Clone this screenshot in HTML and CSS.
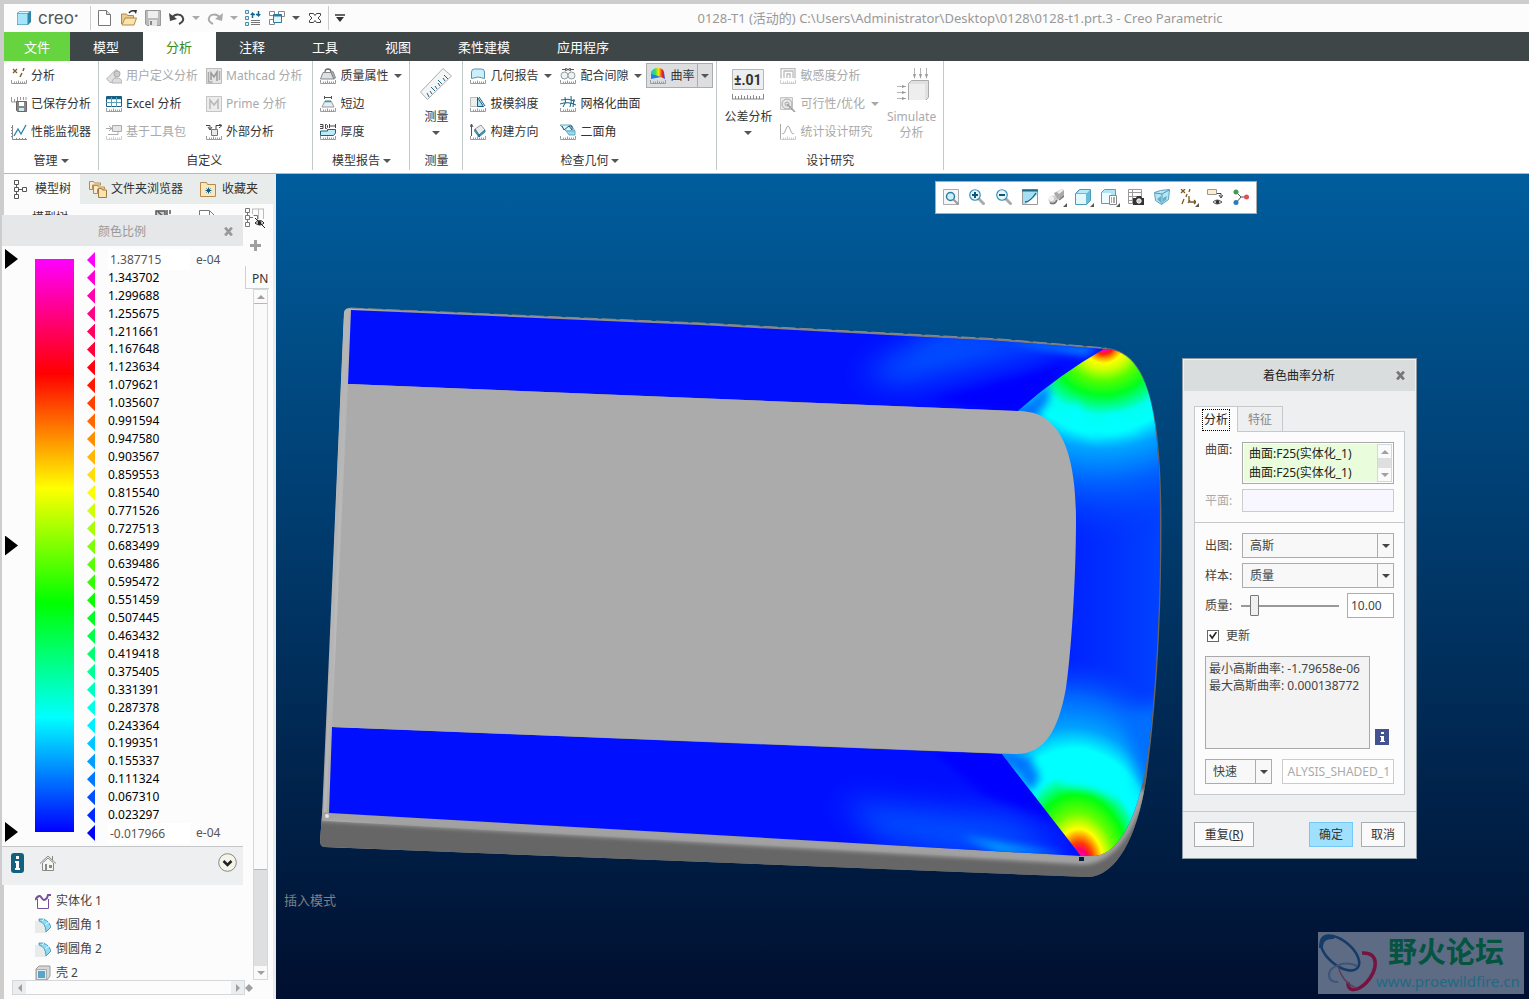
FILE: index.html
```html
<!DOCTYPE html>
<html lang="zh-CN">
    <head>
        <meta charset="utf-8">
        <meta name="viewport" content="width=device-width, initial-scale=1">
        <title>0128-T1 - Creo Parametric</title>
        <link rel="stylesheet" href="styles.css">
    </head>
    <body>
        <svg class="defs" aria-hidden="true">
            <symbol id="ruler" viewBox="0 0 16 16">
                <path d="M.5 12v3.500h15V12M3.500 13.500v2M5.500 13.500v2M7.500 12.500v3M9.500 13.500v2M11.500 13.500v2M13.500 13.500v2" fill="none" stroke="#9a9d9f"/>
            </symbol>
            <symbol id="down" viewBox="0 0 8 4"><path d="M0 0h8L4 4z" fill="currentColor"/></symbol>
            <symbol id="cross" viewBox="0 0 8 8"><path d="M1 .5l6 7M7 .5l-6 7" stroke="currentColor" stroke-width="2.400"/></symbol>
            <symbol id="round" viewBox="0 0 16 16">
                <path d="M0 4h6q5 1 5 7v5H0z" fill="#e9eaea"/>
                <path d="M4 2q9-1 12 8l-5 5q0-9-7-11z" fill="#8fdcf5" stroke="#4c9fbd"/>
                <path d="M7 4l3-3M10 8l4-3" stroke="#d6f5ff"/>
            </symbol>
        </svg>

        <div class="app">
            <header class="titlebar">
                <svg class="cube" viewBox="0 0 16 16"><path d="M1 3l3-2h11v11l-3 3H1z" fill="#2f86ab"/><path d="M1.500 3.500h10v11h-10z" fill="#a5e6fb"/><path d="M2 3l2-1.500h10L12 3z" fill="#d5f5ff"/></svg>
                <span class="brand">creo<i>•</i></span>
                <div class="quick">
                    <button title="新建"><svg viewBox="0 0 16 16"><path d="M1.500.5h8l4 4v11h-12z" fill="#fff" stroke="#777"/><path d="M9.500.5v4h4" fill="#ddd" stroke="#777"/></svg></button>
                    <button title="打开"><svg viewBox="0 0 16 16"><path d="M.5 14V4h5l1 1.500h6V8" fill="#eccb8b" stroke="#b08a4a"/><path d="M1 15l3-7h11.500L13 15z" fill="#fbe3ae" stroke="#b08a4a"/><path d="M8 3q2-3 5-2" fill="none" stroke="#333" stroke-width="1.500"/><path d="M12 0l4 0-1 4z" fill="#333"/></svg></button>
                    <button title="保存"><svg viewBox="0 0 16 16"><path d="M.5.5h15v15H2L.5 14z" fill="#bbb" stroke="#999"/><path d="M3 1h10v7H3z" fill="#eee"/><path d="M4 10h8v6H4z" fill="#e5e5e5"/><path d="M5 11h2v4H5z" fill="#888"/></svg></button>
                    <button title="撤消"><svg viewBox="0 0 16 16"><path d="M3 8c3-5 10-4 11 0 1 3-2 5-4 6" fill="none" stroke="#444" stroke-width="2"/><path d="M0 3l1 8 7-2z" fill="#444"/></svg></button>
                    <button class="more" title="撤消列表"><svg class="arrow pale"><use href="#down"/></svg></button>
                    <button title="重做"><svg viewBox="0 0 16 16"><path d="M13 8C10 3 3 4 2 8c-1 3 2 5 4 6" fill="none" stroke="#aaa" stroke-width="2"/><path d="M16 3l-1 8-7-2z" fill="#aaa"/></svg></button>
                    <button class="more" title="重做列表"><svg class="arrow pale"><use href="#down"/></svg></button>
                    <button title="重新生成"><svg viewBox="0 0 16 16"><path d="M.5.500h3v3h-3zM.5 6.500h3v3h-3zM.5 12.500h3v3h-3z" fill="#d8f3fc" stroke="#4a8db0"/><path d="M6 10.500h9M6 12.500h9M6 14.500h9" stroke="#777"/><path d="M7.500 8V4.500H10M13.500 1v3.500H11" fill="none" stroke="#16648c" stroke-width="1.500"/><path d="M5 5l2.500-3L10 5zM11 4h5l-2.500 3z" fill="#16648c"/></svg></button>
                    <button title="窗口"><svg viewBox="0 0 16 16"><path d="M.5 1.500h5v4h-5zM9.500 1.500h6v5h-6zM.5 9.500h5v5h-5z" fill="#fff" stroke="#888"/><path d="M4.500 4.500h8v8h-8z" fill="#e2f5fc" stroke="#2d7ba0"/><path d="M4 5.500h9" stroke="#2d7ba0" stroke-width="2"/></svg></button>
                    <button class="more" title="窗口列表"><svg class="arrow"><use href="#down"/></svg></button>
                    <button title="关闭"><svg viewBox="0 0 16 16"><path d="M2.500 3.500h4L8 5.500l1.500-2h4v2L11 8l2.500 2.500v2h-4L8 10.500l-1.500 2h-4v-2L5 8 2.500 5.500z" fill="#fff" stroke="#444"/></svg></button>
                </div>
                <button class="customize" title="自定义"><svg viewBox="0 0 10 8"><path d="M0 1h10" stroke="#333" stroke-width="1.500"/><path d="M1 3h8L5 8z" fill="#333"/></svg></button>
                <h1>0128-T1 (活动的) C:\Users\Administrator\Desktop\0128\0128-t1.prt.3 - Creo Parametric</h1>
            </header>

            <nav class="tabs">
                <button class="file">文件</button>
                <button>模型</button>
                <button class="active">分析</button>
                <button>注释</button>
                <button>工具</button>
                <button>视图</button>
                <button>柔性建模</button>
                <button>应用程序</button>
            </nav>

            <div class="ribbon">
                <section class="group">
                    <div class="cols">
                        <div class="col">
                            <button class="cmd"><svg viewBox="0 0 16 16"><use href="#ruler"/><path d="M2 1l4 4M6 1L2 5" stroke="#7b5f2b" stroke-width="1.300"/><path d="M13 0l-1 3M11 5l-2 4" stroke="#7b5f2b" stroke-width="1.500"/></svg>分析</button>
                            <button class="cmd"><svg viewBox="0 0 16 16"><path d="M.5 1v5h6M3.500 3v3M6.500 1v4M9.500 1v3M12.500 1v3M15 1v3" fill="none" stroke="#999"/><path d="M5.500 5.500h10v10h-9l-1-1z" fill="#888" stroke="#666"/><path d="M8 6h5v4H8z" fill="#fff"/><path d="M8 12h5v3H8z" fill="#ccebf5"/></svg>已保存分析</button>
                            <button class="cmd"><svg viewBox="0 0 16 16"><path d="M1.500 1v14.500H16M0 3.500h2M0 6.500h2M0 9.500h2M0 12.500h2M5.500 14v2M8.500 14v2M11.500 14v2M14.500 14v2" fill="none" stroke="#888"/><path d="M3 12l4-7 3 5 5-9" fill="none" stroke="#2681b2" stroke-width="1.300"/></svg>性能监视器</button>
                        </div>
                    </div>
                    <button class="label">管理<svg class="arrow"><use href="#down"/></svg></button>
                </section>

                <section class="group custom">
                    <div class="cols">
                        <div class="col">
                            <button class="cmd" disabled><svg viewBox="0 0 16 16"><path d="M.5 11L10 1.500l4 3L5 15z" fill="#e1e1e1" stroke="#b5b5b5"/><circle cx="11" cy="6" r="3" fill="#ccc" stroke="#aaa"/><path d="M6 15q0-5 5-5t5 5z" fill="#ddd" stroke="#b5b5b5"/></svg>用户定义分析</button>
                            <button class="cmd"><svg viewBox="0 0 16 16"><use href="#ruler"/><path d="M.5.500h15v10H.5z" fill="#fff" stroke="#16607f"/><path d="M1 2h15" stroke="#16607f" stroke-width="2.500"/><path d="M5.500 1v10M10.500 1v10M0 6.500h15" stroke="#5c9db8"/></svg>Excel 分析</button>
                            <button class="cmd" disabled><svg viewBox="0 0 16 16"><use href="#ruler" opacity=".5"/><path d="M6.500 1.500h9v6h-9z" fill="#e5e5e5" stroke="#aaa"/><path d="M0 4.500h6M3 2l3 2.500L3 7M12 8v2.500H2" fill="none" stroke="#aaa"/></svg>基于工具包</button>
                        </div>
                        <div class="col">
                            <button class="cmd" disabled><svg viewBox="0 0 16 16"><path d="M.5.500h15v15H.5z" fill="#e5e5e5" stroke="#bbb"/><path d="M2.500 4v10h4M13.500 3v9" fill="none" stroke="#aaa" stroke-width="1.500"/><path d="M5 12V5l3 4 3-5v9" fill="none" stroke="#999" stroke-width="1.500"/></svg>Mathcad 分析</button>
                            <button class="cmd" disabled><svg viewBox="0 0 16 16"><path d="M.5.500h15v15H.5z" fill="#ececec" stroke="#c5c5c5"/><path d="M4 13V4l4 5 4-5v9" fill="none" stroke="#b8b8b8" stroke-width="1.500"/></svg>Prime 分析</button>
                            <button class="cmd"><svg viewBox="0 0 16 16"><use href="#ruler"/><path d="M5.500 5.500h6v6h-6z" fill="#e7eaea" stroke="#777"/><path d="M0 1.500h4v4M2 3l2 3 2-3M10 5V1.500h5M13 0l3 1.500L13 4" fill="none" stroke="#444"/></svg>外部分析</button>
                        </div>
                    </div>
                    <span class="label">自定义</span>
                </section>

                <section class="group">
                    <div class="cols">
                        <div class="col">
                            <button class="cmd"><svg viewBox="0 0 16 16"><use href="#ruler"/><path d="M3 4.500h8l3 6.500H.5z" fill="#dce1e3" stroke="#888"/><path d="M11 4.500l2-1 2.500 6.500-1.500 1z" fill="#aab2b5" stroke="#888"/><path d="M5 4q0-3 3-3t3 3" fill="none" stroke="#666" stroke-width="1.300"/></svg>质量属性<svg class="arrow"><use href="#down"/></svg></button>
                            <button class="cmd"><svg viewBox="0 0 16 16"><use href="#ruler"/><path d="M5 5h6l3 6H2z" fill="#e5eef1" stroke="#999"/><path d="M5 5.500h6" stroke="#2a97bd" stroke-width="1.500"/><path d="M4.500 0v3M11.500 0v3M5 1.500h6" stroke="#555"/></svg>短边</button>
                            <button class="cmd"><svg viewBox="0 0 16 16"><use href="#ruler"/><path d="M.5 7h7v-1.500h8V9l-2 2.500H.5z" fill="#bfe9f7" stroke="#17617f"/><path d="M0 .500h3v4H0M0 2.500h3M5.500.5h1l1 1v2l-1 1h-1zM9.500 0v4M15.500 0v4M10 2h5" fill="none" stroke="#444"/></svg>厚度</button>
                        </div>
                    </div>
                    <button class="label">模型报告<svg class="arrow"><use href="#down"/></svg></button>
                </section>

                <section class="group">
                    <div class="cols">
                        <button class="big">
                            <svg class="pic" viewBox="0 0 34 32"><path d="M1.500 24L24 .500 32.500 8 8.500 31.500z" fill="#f4f5f5" stroke="#a9adaf"/><path d="M10 29l-2-4M13 26l-2-3M16 23l-4-4M18 21l-2-3M21 18l-2-3M23 16l-4-4M26 13l-2-3M29 11l-4-4" stroke="#27617f"/></svg>
                            测量
                            <svg class="arrow"><use href="#down"/></svg>
                        </button>
                    </div>
                    <span class="label">测量</span>
                </section>

                <section class="group">
                    <div class="cols">
                        <div class="col">
                            <button class="cmd"><svg viewBox="0 0 16 16"><use href="#ruler"/><path d="M1.500 10.500V4q0-3 3-3h7q3 0 3 3v6.500q-6-3-13 0z" fill="#c9effb" stroke="#5f93a6"/></svg>几何报告<svg class="arrow"><use href="#down"/></svg></button>
                            <button class="cmd"><svg viewBox="0 0 16 16"><use href="#ruler"/><path d="M.5 1.500h7v9h-7z" fill="#eceeee" stroke="#bbb"/><path d="M7.500 1.500l6 9h-6z" fill="#a9e2f5" stroke="#155f7f"/><path d="M9 1l6 9" stroke="#155f7f"/></svg>拔模斜度</button>
                            <button class="cmd"><svg viewBox="0 0 16 16"><use href="#ruler"/><path d="M1.500 12V1M0 3l1.500-3L3 3" fill="none" stroke="#555"/><path d="M5 5l6-4 4 5-6 5z" fill="#e9ecec" stroke="#999"/><path d="M5 5l4 6v2L4.500 7zM9 11l6-5v2l-6 5z" fill="#4fa9c9" stroke="#155f7f" stroke-width=".7"/></svg>构建方向</button>
                        </div>
                        <div class="col">
                            <button class="cmd"><svg viewBox="0 0 16 16"><use href="#ruler"/><circle cx="4.500" cy="7.500" r="3.500" fill="#e8f4f8" stroke="#999"/><circle cx="11.500" cy="7.500" r="3.500" fill="#e8f4f8" stroke="#999"/><path d="M2 1.500h4M14 1.500h-4M5 0l3 1.500L5 3M11 0L8 1.500 11 3" fill="none" stroke="#555"/></svg>配合间隙<svg class="arrow"><use href="#down"/></svg></button>
                            <button class="cmd"><svg viewBox="0 0 16 16"><use href="#ruler"/><path d="M1 4q7-2 14 1M0 8q8-3 16 1M5 1q2 5-2 10M11 0q1 6-1 11M14 3l-1 8" fill="none" stroke="#17617f"/></svg>网格化曲面</button>
                            <button class="cmd"><svg viewBox="0 0 16 16"><use href="#ruler"/><path d="M0 1h11l4 6H6z" fill="#def3f9" stroke="#6aa7bd"/><path d="M6 7h9v4H9z" fill="#8fdcf2" stroke="#6aa7bd"/><path d="M2 2l2 4 5-4 3 4M9 2h3v4" fill="none" stroke="#17617f"/></svg>二面角</button>
                        </div>
                        <div class="split">
                            <button class="cmd"><svg viewBox="0 0 16 16"><defs><linearGradient id="spec"><stop offset="0" stop-color="#24b9ff"/><stop offset=".3" stop-color="#35e050"/><stop offset=".55" stop-color="#ffe500"/><stop offset=".8" stop-color="#f02020"/><stop offset="1" stop-color="#3048ff"/></linearGradient></defs><use href="#ruler"/><path d="M1 10V4q2-4 7-4t6 4l1 7q-6-4-14-1z" fill="url(#spec)"/><path d="M1 11V6l4 1 3 1 3 1z" fill="#247cf0"/></svg>曲率</button>
                            <button class="drop" title="曲率选项"><svg class="arrow"><use href="#down"/></svg></button>
                        </div>
                    </div>
                    <button class="label">检查几何<svg class="arrow"><use href="#down"/></svg></button>
                </section>

                <section class="group">
                    <div class="cols">
                        <button class="big">
                            <svg class="pic" viewBox="0 0 34 32"><path d="M1.500 1.500h31v20h-31z" fill="#eceeef" stroke="#b5b9bb"/><path d="M1.500 31V26M4.500 28v3M7.500 28v3M10.500 27v4M13.500 28v3M16.500 27v4M19.500 28v3M22.500 27v4M25.500 28v3M28.500 28v3M32.500 26v5M1 31h32" stroke="#888"/><text class="tol" x="3" y="17">±.01</text></svg>
                            公差分析
                            <svg class="arrow"><use href="#down"/></svg>
                        </button>
                        <div class="col">
                            <button class="cmd" disabled><svg viewBox="0 0 16 16"><use href="#ruler" opacity=".5"/><path d="M1 10.500V.500h14v10M4 10V3h9v7M7 10V6h3v4" fill="none" stroke="#bbb" stroke-width="1.300"/></svg>敏感度分析</button>
                            <button class="cmd" disabled><svg viewBox="0 0 16 16"><path d="M.5 1.500h12v12H.5z" fill="#e9e9e9" stroke="#c5c5c5"/><circle cx="7" cy="8" r="5" fill="none" stroke="#aaa"/><circle cx="7" cy="8" r="2" fill="none" stroke="#aaa"/><path d="M7 8l8 8" stroke="#999" stroke-width="1.500"/></svg>可行性/优化<svg class="arrow"><use href="#down"/></svg></button>
                            <button class="cmd" disabled><svg viewBox="0 0 16 16"><use href="#ruler" opacity=".5"/><path d="M.5 0v15M2 10q3 0 4-5 2-6 4 0 1 5 4 5" fill="none" stroke="#aaa"/></svg>统计设计研究</button>
                        </div>
                        <button class="big" disabled>
                            <svg class="pic" viewBox="0 0 34 32"><path d="M13.500 15.500l3-3h17v17l-3 3h-17z" fill="#e0e0e0" stroke="#aaa"/><path d="M14 16h16v16H14z" fill="#eee"/><path d="M19.500 0v9M25.500 0v9M31.500 0v9M2 18.500h9M2 24.500h9M2 30.500h9" stroke="#b5b5b5"/><path d="M18 6h3l-1.500 5zM24 6h3l-1.500 5zM30 6h3l-1.500 5zM7 17v3l4-1.500zM7 23v3l4-1.500zM7 29v3l4-1.500z" fill="#999"/></svg>
                            Simulate<br>分析
                        </button>
                    </div>
                    <span class="label">设计研究</span>
                </section>
            </div>

            <main>
                <aside class="navigator">
                    <div class="navtabs">
                        <button class="active"><svg viewBox="0 0 16 20"><path d="M2.500 1.500h4v4h-4zM2.500 8.500h4v4h-4zM2.500 15.500h4v4h-4zM10.500 8.500h4v4h-4zM4.500 6v2M4.500 13v2M7 10.500h3" fill="#fff" stroke="#555"/></svg>模型树</button>
                        <button><svg class="wide" viewBox="0 0 19 20"><path d="M1.500 10.500v-8h4l1 1.500h6v2H4.500v4.500z" fill="#fbeacb" stroke="#b58a4d"/><path d="M5.500 14.500v-8h4l1 1.500h6v2H9.500v4.500z" fill="#fbeacb" stroke="#b58a4d"/><path d="M10.500 18.500v-9h3l1 1.500h4v7.500z" fill="#fbe2b3" stroke="#a47b3f"/></svg>文件夹浏览器</button>
                        <button><svg class="wide" viewBox="0 0 19 20"><path d="M1.500 17.500v-14h6l1 2h8v12z" fill="#fbe7bd" stroke="#b58a4d"/><path d="M9.500 8.500v6M6.500 11.500h6M7.500 9.500l4 4M11.500 9.500l-4 4" stroke="#125f85"/></svg>收藏夹</button>
                    </div>
                    <div class="treehead"><b>模型树</b>
                        <svg viewBox="0 0 18 18"><path d="M2 2h9v5H2zM13 1v8M16 1v4M4 3l6 5" fill="#ccc" stroke="#555" stroke-width="1.500"/></svg>
                        <svg viewBox="0 0 18 18"><path d="M1.500 16V1.500h10l5 5V16" fill="#fff" stroke="#777"/><path d="M11.500 2v5h5" fill="none" stroke="#777"/></svg>
                    </div>
                    <div class="treebody">
                        <div class="treemain">
                            <ul class="tree">
                                <li><svg viewBox="0 0 16 16"><path d="M2.500 6v9.500h11V6" fill="#fff" stroke="#77509b"/><path d="M0 7q4-6 6-3t3 3 3-2l1-3h3" fill="none" stroke="#77509b" stroke-width="2"/></svg>实体化 1</li>
                                <li><svg><use href="#round"/></svg>倒圆角 1</li>
                                <li><svg><use href="#round"/></svg>倒圆角 2</li>
                                <li><svg viewBox="0 0 16 16"><path d="M1 4l3-3h11v10l-3 4H1z" fill="#d5d8d9" stroke="#999"/><path d="M1.500 4.500h10v10h-10z" fill="#e9ebeb" stroke="#aaa"/><path d="M3 6h7v7H3z" fill="#57a6c9"/></svg>壳 2</li>
                            </ul>
                            <div class="hscroll"><button title="左"><svg viewBox="0 0 4 8"><path d="M4 0v8L0 4z"/></svg></button><span></span><button title="右"><svg viewBox="0 0 4 8"><path d="M0 0v8l4-4z"/></svg></button></div>
                        </div>
                        <div class="treecol">
                            <div class="coltools">
                                <svg viewBox="0 0 21 22"><path d="M.5 1.500h4v4h-4zM.5 8.500h4v4h-4zM.5 15.500h4v4h-4zM8.500 8.500h4v4M2.500 6v2M2.500 13v2M5 10.500h3" fill="#fff" stroke="#777"/><path d="M7 2h12M7.500 2v5M13.500 2v10M18.500 2v10" fill="none" stroke="#bbb"/><path d="M10 16q5-5 9 0-4 4-9 0z" fill="#fff" stroke="#222"/><circle cx="14.500" cy="16" r="2" fill="#222"/><path d="M10 11l10 10" stroke="#222"/></svg>
                                <svg class="plus" viewBox="0 0 11 11"><path d="M5.500 0v11M0 5.500h11" stroke="#a0a0a0" stroke-width="3"/></svg>
                            </div>
                            <div class="colname">PN</div>
                            <div class="vscroll"><button title="上"><svg viewBox="0 0 8 4"><path d="M0 4h8L4 0z"/></svg></button><span></span><button title="下"><svg viewBox="0 0 8 4"><path d="M0 0h8L4 4z"/></svg></button></div>
                            <div class="corner"><svg viewBox="0 0 8 8"><path d="M4 0l4 4-4 4-4-4z"/></svg></div>
                        </div>
                    </div>
                </aside>

                <div class="viewport">
                    <svg class="model" viewBox="276 174 1253 825" role="img" aria-label="曲率着色模型">
                        <defs>
                            <radialGradient id="hotTop" gradientUnits="userSpaceOnUse" cx="0" cy="0" r="175" gradientTransform="translate(1104 345) rotate(-6) scale(1.250 1.140)">
                                <stop offset="0" stop-color="#f0f"/><stop offset=".030" stop-color="#ff00a0"/><stop offset=".045" stop-color="#f20"/><stop offset=".065" stop-color="#ff9000"/>
                                <stop offset=".090" stop-color="#ff0"/><stop offset=".125" stop-color="#cf0"/><stop offset=".180" stop-color="#5f0"/><stop offset=".250" stop-color="#00ff20"/><stop offset=".310" stop-color="#0f9"/>
                                <stop offset=".350" stop-color="#00fff0"/><stop offset=".430" stop-color="#0ff"/><stop offset=".520" stop-color="#00a4ff"/><stop offset=".680" stop-color="#0064ff"/>
                                <stop offset="1" stop-color="#0030ff" stop-opacity="0"/>
                            </radialGradient>
                            <radialGradient id="hotBottom" gradientUnits="userSpaceOnUse" cx="0" cy="0" r="150" gradientTransform="translate(1080 859) rotate(-8) scale(1 1.340)">
                                <stop offset="0" stop-color="#f0f"/><stop offset=".050" stop-color="#ff0060"/><stop offset=".085" stop-color="#f40"/><stop offset=".150" stop-color="#ff0"/>
                                <stop offset=".230" stop-color="#6f0"/><stop offset=".320" stop-color="#00ff10"/><stop offset=".380" stop-color="#00ff90"/><stop offset=".430" stop-color="#0ff"/>
                                <stop offset=".550" stop-color="#0ff"/><stop offset=".660" stop-color="#00a0ff"/><stop offset=".820" stop-color="#0064ff"/><stop offset="1" stop-color="#0040ff" stop-opacity="0"/>
                            </radialGradient>
                            <linearGradient id="band" x1="0" x2="1"><stop offset=".3" stop-color="#0018ff"/><stop offset=".7" stop-color="#0030ff"/><stop offset="1" stop-color="#0044ff"/></linearGradient>
                            <linearGradient id="edge" x1="0" x2="1"><stop offset="0" stop-color="#8a8a8a"/><stop offset=".030" stop-color="#bbb"/><stop offset=".100" stop-color="#999"/><stop offset=".900" stop-color="#777"/><stop offset="1" stop-color="#606060"/></linearGradient>
                            <filter id="soft" x="-50%" y="-50%" width="200%" height="200%"><feGaussianBlur stdDeviation="14"/></filter>
                            <filter id="mid" x="-50%" y="-50%" width="200%" height="200%"><feGaussianBlur stdDeviation="8"/></filter>
                            <filter id="thin" x="-20%" y="-50%" width="140%" height="200%"><feGaussianBlur stdDeviation="4"/></filter>
                            <filter id="bevel" x="-5%" y="-20%" width="110%" height="140%"><feGaussianBlur stdDeviation="2"/></filter>
                            <clipPath id="body"><path d="M344 312Q345 308 350 308L700 323 1000 339 1106 348C1132 350 1148 372 1156 425 1162 470 1162 520 1161 570 1160 640 1155 720 1146 780 1137 838 1116 876 1088 877L324 847Q320 846 320 841L322 815z"/></clipPath>
                            <clipPath id="faceTop"><path d="M351 310L700 325 1000 341 1104 349Q1060 374 1018 411L348 384z"/></clipPath>
                            <clipPath id="faceBottom"><path d="M332 727L1002 754 1081 856 329 813z"/></clipPath>
                            <clipPath id="faceRight"><path d="M1104 349C1130 349 1148 372 1155 425 1160 465 1160 500 1160 560 1159 620 1156 700 1145 770 1138 810 1122 853 1095 856L1081 856 1002 754 980 600 1018 411Q1060 374 1104 349z"/></clipPath>
                        </defs>
                        <g clip-path="url(#body)">
                            <path d="M310 300h860v590H310z" fill="url(#edge)"/>
                            <path d="M310 820L1079 863Q1122 866 1146 770L1170 880H310z" fill="#666"/>
                            <path d="M312 815L1079 859Q1118 862 1142 790" fill="none" stroke="#a2a2a2" stroke-width="11" filter="url(#bevel)"/>
                            <path d="M325 812L345 318" stroke="#b5b5b5" stroke-width="3"/>
                        </g>
                        <circle cx="327" cy="816" r="2" fill="#e5e5e5"/>
                        <g clip-path="url(#faceTop)">
                            <path d="M340 300h780v120H340z" fill="#0010ff"/>
                            <path d="M860 375L940 325 1060 330 1050 350 900 385z" fill="#0060ff" opacity=".8" filter="url(#soft)"/>
                            <path d="M930 400L1070 362 1020 415z" fill="#00f" filter="url(#thin)"/>
                            <path d="M1010 342L1100 348 1085 355 1040 348z" fill="#009cff" filter="url(#thin)"/>
                        </g>
                        <g clip-path="url(#faceBottom)">
                            <path d="M320 720h770v140H320z" fill="#0010ff"/>
                            <path d="M840 800L1010 815 1070 850 960 860 880 840z" fill="#0060ff" opacity=".75" filter="url(#soft)"/>
                            <path d="M930 750h75l50 70-70-25z" fill="#00f" filter="url(#thin)"/>
                            <path d="M960 836L1070 855 1000 853z" fill="#00a8ff" filter="url(#thin)"/>
                        </g>
                        <g clip-path="url(#faceRight)">
                            <path d="M980 340h185v520H980z" fill="url(#band)"/>
                            <path d="M980 340h185v220H980z" fill="url(#hotTop)"/>
                            <path d="M980 600h185v260H980z" fill="url(#hotBottom)"/>
                            <path d="M1075 400L1100 440 1060 425zM1110 412L1140 430 1100 436z" fill="#0ff" filter="url(#thin)"/>
                            <path d="M1055 758L1085 748 1110 775 1120 800 1095 790 1060 785z" fill="#0ff" filter="url(#thin)"/>
                            <path d="M1125 715L1175 700 1160 810 1142 785z" fill="#0070ff" filter="url(#mid)"/>
                            <path d="M1010 415L1050 383 1048 402 1034 420zM1002 754L1030 757 1040 778 1030 792z" fill="#0058ff" opacity=".8" filter="url(#thin)"/>
                        </g>
                        <path d="M348 384L1018 411C1052 411 1076 436 1076 520 1076 580 1071 655 1066 688 1058 732 1044 755 1014 754L332 727z" fill="#ababab"/>
                        <path d="M350 308L700 323 1000 339 1106 348" fill="none" stroke="#8a8a8a" stroke-dasharray="14 4"/>
                        <path d="M1079 857h5v4h-5z" fill="#001a40"/>
                    </svg>

                    <div class="viewtools">
                        <button title="重新调整"><svg viewBox="0 0 16 16"><path d="M.5.500h15v15H.5z" fill="#f6f6f6" stroke="#aaa"/><circle cx="7.500" cy="7.500" r="4" fill="#cceffa" stroke="#2c7fa2" stroke-width="1.500"/><path d="M10.500 10.500l5 5" stroke="#999" stroke-width="2"/></svg></button>
                        <button title="放大"><svg viewBox="0 0 16 16"><path d="M9.500 9.500l6 6" stroke="#aaa" stroke-width="3"/><circle cx="6" cy="6" r="5.250" fill="#e6f8fd" stroke="#3a8db0" stroke-width="1.200"/><path d="M3 6h6M6 3v6" stroke="#0e587b" stroke-width="2"/></svg></button>
                        <button title="缩小"><svg viewBox="0 0 16 16"><path d="M9.500 9.500l6 6" stroke="#aaa" stroke-width="3"/><circle cx="6" cy="6" r="5.250" fill="#e6f8fd" stroke="#3a8db0" stroke-width="1.200"/><path d="M3 6h6" stroke="#0e587b" stroke-width="2"/></svg></button>
                        <button title="重画"><svg viewBox="0 0 16 16"><path d="M.5.500h15v15H.5z" fill="#a7dff2" stroke="#999"/><path d="M0 1.500h16" stroke="#1b6a8b" stroke-width="2"/><path d="M4 15L15 6v9z" fill="#fff"/><path d="M3 13q5 0 11-9" fill="none" stroke="#17617f" stroke-width="1.300"/></svg></button>
                        <button title="渲染"><svg viewBox="0 0 16 16"><path d="M6 4l8-4 2 1v6l-7 4z" fill="#aaa"/><path d="M9 3l5-3 2 1-5 4z" fill="#eee"/><circle cx="5" cy="11" r="4.500" fill="#ccc"/><circle cx="3.500" cy="9.500" r="2.500" fill="#f2f2f2"/><path d="M2 14q5 2 7-3M11 11l5-4" fill="none" stroke="#777" stroke-width="1.500"/></svg><i></i></button>
                        <button title="显示样式"><svg viewBox="0 0 16 16"><path d="M.5 4.500l4-4h11v11l-4 4H.5z" fill="#67bbd9" stroke="#4a9ab9"/><path d="M1 5h10v10H1z" fill="#e3f7fd"/><path d="M2 4l3-3h10l-3 3z" fill="#b5eafa"/></svg><i></i></button>
                        <button title="已保存方向"><svg viewBox="0 0 16 16"><path d="M.5 3.500l3-3h11v11l-3 3H.5z" fill="#aee6f8" stroke="#559fba"/><path d="M1 4h9v10H1z" fill="#f0fbff"/><path d="M8.500 6.500h7v9h-7z" fill="#fff" stroke="#888"/><path d="M10 9h1M12 9h2M10 11h1M12 11h2M10 13h1M12 13h2" stroke="#555"/></svg><i></i></button>
                        <button title="视图管理器"><svg viewBox="0 0 16 16"><path d="M.5.500h13v14H.5zM0 3.500h14M0 7.500h14M0 11.500h14M4.500 0v15" fill="#fff" stroke="#999"/><path d="M5 9h3l1-2h4l1 2h2v7H5z" fill="#333"/><circle cx="11" cy="12" r="2.200" fill="#ccc" stroke="#fff"/></svg></button>
                        <button title="透视图"><svg viewBox="0 0 16 16"><path d="M.5 3.500l6-2 9-1-1 10-7 5-6-4z" fill="#b5e6f5" stroke="#5aa0bb"/><path d="M1 4l7 1 7-4M8 5v10" fill="none" stroke="#4c9bb9"/><path d="M3 10l4-3v7zM9 9l4-2-1 4-3 2z" fill="#6badc6"/></svg></button>
                        <button title="基准显示"><svg viewBox="0 0 16 16"><path d="M1 0l4 4M5 0L1 4M10 0L9 3M7 5L6 8M4 10l-2 5" stroke="#7a5b22" stroke-width="1.300"/><path d="M9 7v6h7M14 11l2 2-2 2M8 14l2-3" fill="none" stroke="#7a5b22" stroke-width="1.300"/></svg><i></i></button>
                        <button title="注释显示"><svg viewBox="0 0 16 16"><path d="M.5.500h9v5h-9z" fill="#fdeecb" stroke="#999"/><path d="M10 4.500h4v4M12 6l2 3 2-3" fill="none" stroke="#444"/><path d="M6 13q4-4 9 0-5 4-9 0z" fill="#fff" stroke="#555"/><circle cx="10.500" cy="13" r="2" fill="#333"/></svg></button>
                        <button title="旋转中心"><svg viewBox="0 0 16 16"><path d="M3 3l5 5-5 6M8 8h5" fill="none" stroke="#555"/><circle cx="3" cy="3" r="2.500" fill="#3f9c50"/><circle cx="3" cy="13.500" r="2.500" fill="#2a7eb8"/><circle cx="13.500" cy="8" r="2.500" fill="#df5353"/></svg></button>
                    </div>

                    <p class="mode">插入模式</p>

                    <div class="watermark">
                        <svg viewBox="0 0 60 60"><ellipse cx="22" cy="21" rx="12" ry="23" transform="rotate(-50 22 21)" fill="none" stroke="#153c66" stroke-width="2.500"/><path d="M3 16Q3 4 16 5" fill="none" stroke="#153c66" stroke-width="4"/><path d="M39 34C28 28 11 34 11 43q0 7 9 7" fill="none" stroke="#3a5577" stroke-width="2"/><path d="M44 21C62 20 60 38 48 51 40 59 29 61 30 50" fill="none" stroke="#74143f" stroke-width="3.500"/><path d="M20 34Q24 50 38 56" fill="none" stroke="#54415f" stroke-width="1.500"/></svg>
                        <div><strong>野火论坛</strong><span>www.proewildfire.cn</span></div>
                    </div>
                </div>
            </main>
        </div>

        <section class="window scale">
            <header><h2>颜色比例</h2><button title="关闭"><svg><use href="#cross"/></svg></button></header>
            <div class="legend">
                <div class="stops"><span></span><span></span><span></span></div>
                <div class="ramp"></div>
                <ol id="levels"></ol>
            </div>
            <footer>
                <svg class="info" viewBox="0 0 13 20"><rect width="13" height="20" rx="3" fill="#14607f"/><path d="M5 3h3v3H5zM4 8h4v7h1v2H4v-2h1v-5H4z" fill="#fff"/></svg>
                <svg class="home" viewBox="0 0 16 16"><path d="M2.500 8v7.500h11V8L8 3z" fill="#f5f5f0" stroke="#888"/><path d="M0 8.500L8 1l8 7.500M12.500 1v4" fill="none" stroke="#888"/><path d="M5 9h2v6H5zM9 10h3v3H9z" fill="#888"/></svg>
                <button title="展开"><svg viewBox="0 0 19 19"><circle cx="9.500" cy="9.500" r="8.800" fill="#f5f4e9" stroke="#888"/><path d="M5.500 8l4 4 4-4" fill="none" stroke="#222" stroke-width="2.500"/></svg></button>
            </footer>
        </section>

        <form class="window shading" onsubmit="return false">
            <header><h2>着色曲率分析</h2><button type="button" title="关闭"><svg><use href="#cross"/></svg></button></header>
            <div class="pagetabs"><button type="button" class="active"><span>分析</span></button><button type="button">特征</button></div>
            <div class="page">
                <div class="field top"><label for="surf">曲面:</label>
                    <div class="listbox"><select id="surf" size="2"><option>曲面:F25(实体化_1)</option><option>曲面:F25(实体化_1)</option></select>
                        <div class="vscroll"><button type="button" title="上"><svg viewBox="0 0 8 4"><path d="M0 4h8L4 0z"/></svg></button><button type="button" title="下"><svg viewBox="0 0 8 4"><path d="M0 0h8L4 4z"/></svg></button></div></div>
                </div>
                <div class="field off"><label for="plane">平面:</label><input id="plane" type="text" disabled></div>
                <hr>
                <div class="field"><label for="plot">出图:</label><span class="combo"><select id="plot"><option>高斯</option></select><i><svg><use href="#down"/></svg></i></span></div>
                <div class="field"><label for="sample">样本:</label><span class="combo"><select id="sample"><option>质量</option></select><i><svg><use href="#down"/></svg></i></span></div>
                <div class="field"><label for="quality">质量:</label><input id="quality" type="range" min="0" max="100" value="10"><input class="num" type="text" value="10.00" aria-label="质量值"></div>
                <div class="field check"><input id="update" type="checkbox" checked><label for="update">更新</label></div>
                <div class="result">
                    <textarea readonly aria-label="结果">最小高斯曲率: -1.79658e-06
最大高斯曲率: 0.000138772</textarea>
                    <svg viewBox="0 0 14 16"><path d="M0 0h14v16H0z" fill="#43538f"/><path d="M6 3h3v2H6zM5 7h4v5h1v1H5v-1h1V8H5z" fill="#fff"/></svg>
                </div>
                <div class="field save"><span class="combo"><select aria-label="类型"><option>快速</option></select><i><svg><use href="#down"/></svg></i></span><span class="name"><input type="text" value="ALYSIS_SHADED_1" disabled aria-label="名称"></span></div>
            </div>
            <footer>
                <button type="button">重复(<u>R</u>)</button>
                <button type="submit" class="ok">确定</button>
                <button type="button">取消</button>
            </footer>
        </form>

        <script>
            const levels = ["1.387715", "1.343702", "1.299688", "1.255675", "1.211661", "1.167648", "1.123634", "1.079621",
                "1.035607", "0.991594", "0.947580", "0.903567", "0.859553", "0.815540", "0.771526", "0.727513", "0.683499",
                "0.639486", "0.595472", "0.551459", "0.507445", "0.463432", "0.419418", "0.375405", "0.331391", "0.287378",
                "0.243364", "0.199351", "0.155337", "0.111324", "0.067310", "0.023297", "-0.017966"];
            const last = levels.length - 1;

            // hue runs magenta -> red -> yellow -> green -> cyan -> blue
            document.getElementById("levels").innerHTML = levels.map(function (value, i) {
                const hue = (300 + 300 * i / last) % 360;
                const mark = '<i style="background: hsl(' + hue + ', 100%, 50%)"></i>';
                if (i === 0 || i === last) {
                    return '<li>' + mark + '<input type="text" value="' + value + '" aria-label="界限"><span>e-04</span></li>';
                }
                return '<li>' + mark + value + '</li>';
            }).join("");
        </script>
    </body>
</html>
```
FILE: styles.css
```css
* {
    box-sizing: border-box;
}
body {
    margin: 0;
    color: #333;
    font: 12px/16px "Noto Sans", "Noto Sans CJK SC", sans-serif;
}
button, input, select, textarea {
    margin: 0;
    padding: 0;
    border: 0;
    border-radius: 0;
    background: none;
    color: inherit;
    font: inherit;
}
svg {
    display: block;
    flex: none;
}
h1, h2, p, ul, ol {
    margin: 0;
    padding: 0;
    font-size: 12px;
    font-weight: normal;
    list-style: none;
}
.defs {
    position: absolute;
    width: 0;
    height: 0;
}
.arrow {
    width: 8px;
    height: 4px;
    color: #555;
}
.arrow.pale {
    color: #aaa;
}
.app {
    display: flex;
    flex-direction: column;
    height: 100vh;
    border-top: 4px solid #cdcdcd;
    border-left: 4px solid #cdcdcd;
    overflow: hidden;
}

/* title bar */
.titlebar {
    display: flex;
    align-items: center;
    flex: none;
    height: 28px;
    padding-left: 12px;
    background: #fcfcfc;
}
.cube {
    width: 16px;
    height: 16px;
}
.brand {
    width: 50px;
    padding: 0 0 3px 6px;
    color: #555;
    font: 17px/20px Inter, sans-serif;
}
.brand i {
    font-size: 8px;
    vertical-align: 6px;
}
.quick {
    display: flex;
    align-items: center;
    height: 24px;
    padding: 0 1px 0 2px;
    border: solid #ccc;
    border-width: 0 1px;
    margin-left: 8px;
}
.quick button {
    padding: 0 4px;
}
.quick button svg {
    width: 16px;
    height: 16px;
}
.quick .more {
    padding: 0 3px;
}
.quick .more svg {
    width: 8px;
    height: 4px;
}
.customize {
    padding: 0 6px;
}
.customize svg {
    width: 10px;
    height: 8px;
}
.titlebar h1 {
    flex: 1;
    padding-left: 40px;
    color: #999;
    font-size: 13px;
    text-align: center;
}

/* ribbon */
.tabs {
    display: flex;
    flex: none;
    height: 29px;
    background: #3e4647;
}
.tabs button {
    padding: 0 24px 0 23px;
    color: #fff;
    font-size: 13px;
}
.tabs .file {
    padding: 0 20px;
    background: #65d43e;
}
.tabs .active {
    background: #fff;
    color: #3d8a1c;
}
.ribbon {
    display: flex;
    flex: none;
    height: 113px;
    border-bottom: 1px solid #b4b9ba;
    background: #fff;
}
.group {
    display: flex;
    flex-direction: column;
    padding: 1px 7px 0;
    margin-bottom: 3px;
    border-right: 1px solid #c3c9ca;
}
.custom {
    padding-right: 10px;
}
.cols {
    display: flex;
    flex: none;
    gap: 8px;
    height: 84px;
}
.col {
    display: flex;
    flex-direction: column;
}
.cmd {
    display: flex;
    align-items: center;
    gap: 4px;
    height: 28px;
    white-space: nowrap;
}
.cmd svg {
    width: 16px;
    height: 16px;
}
.cmd .arrow {
    width: 8px;
    height: 4px;
    margin-left: 2px;
}
button:disabled, button:disabled .arrow {
    color: #a9a9a9;
}
.label {
    display: flex;
    align-items: center;
    justify-content: center;
    gap: 3px;
    height: 24px;
    padding-top: 5px;
    flex: none;
}
.big {
    display: flex;
    flex-direction: column;
    align-items: center;
    padding-top: 6px;
    white-space: nowrap;
}
.big .pic {
    width: 34px;
    height: 32px;
    margin: 0 2px 9px;
}
.big .arrow {
    margin-top: 6px;
}
.tol {
    fill: #333;
    font: bold 14px Roboto, sans-serif;
}
.split {
    display: flex;
    height: 25px;
    margin: 1px -4px 0 -4px;
    border: 1px solid #a9adaf;
    background: #dcdedf;
}
.split .cmd {
    height: 23px;
    padding: 0 3px;
}
.split .drop {
    padding: 0 3px;
    border-left: 1px solid #a9adaf;
}

/* model tree */
main {
    display: flex;
    flex: 1;
    min-height: 0;
}
.navigator {
    display: flex;
    flex-direction: column;
    flex: none;
    width: 272px;
    border-right: 3px solid #e8eced;
    background: #fcfcfc;
}
.navtabs {
    display: flex;
    flex: none;
    height: 30px;
    background: #e8edec;
}
.navtabs button {
    display: flex;
    align-items: center;
    gap: 4px;
    padding: 0 8px;
    white-space: nowrap;
}
.navtabs .active {
    gap: 7px;
    padding-right: 9px;
    background: #fcfcfc;
}
.navtabs svg {
    width: 16px;
    height: 20px;
}
.navtabs .wide {
    width: 19px;
}
.treehead {
    display: flex;
    align-items: center;
    gap: 26px;
    flex: none;
    height: 28px;
    padding-left: 28px;
}
.treehead b {
    margin-right: 60px;
    font-weight: normal;
}
.treehead svg {
    width: 18px;
    height: 18px;
}
.treebody {
    display: flex;
    flex: 1;
    min-height: 0;
    padding: 0 4px 4px 8px;
}
.treemain {
    display: flex;
    flex-direction: column;
    flex: 1;
}
.tree {
    display: flex;
    flex-direction: column;
    justify-content: flex-end;
    flex: 1;
    min-height: 0;
    overflow: hidden;
    color: #444;
}
.tree li {
    display: flex;
    align-items: center;
    gap: 5px;
    flex: none;
    height: 24px;
    padding-left: 23px;
}
.tree li:last-child {
    margin-bottom: -5px;
}
.tree svg {
    width: 16px;
    height: 16px;
}
.hscroll, .vscroll {
    display: flex;
    flex: none;
    border: 1px solid #d5d8da;
    fill: #a0a0a0;
}
.hscroll {
    height: 15px;
}
.hscroll span, .vscroll span {
    flex: 1;
}
.hscroll button, .vscroll button {
    display: flex;
    align-items: center;
    justify-content: center;
    width: 13px;
    height: 13px;
    background: #fafafa;
}
.hscroll button {
    background: #ecedef;
}
.hscroll svg {
    width: 4px;
    height: 8px;
}
.vscroll svg {
    width: 8px;
    height: 4px;
}
.treecol {
    display: flex;
    flex-direction: column;
    width: 24px;
    margin-top: -28px;
}
.coltools {
    flex: none;
    height: 62px;
    padding-top: 3px;
}
.coltools svg {
    width: 21px;
    height: 22px;
}
.coltools .plus {
    width: 11px;
    height: 11px;
    margin: 11px 0 0 5px;
}
.colname {
    flex: none;
    height: 23px;
    padding: 5px 0 0 6px;
    border: solid #ccd2d4;
    border-width: 0 0 1px 1px;
    overflow: hidden;
}
.treecol .vscroll {
    flex-direction: column;
    flex: 1;
    margin-left: 8px;
    width: 15px;
    background: #dddfe1;
}
.treecol .vscroll span {
    flex: none;
    height: calc(100% - 122px);
    margin-bottom: auto;
    border: solid #b5b8ba;
    border-width: 1px 0;
    background: #fafafa;
}
.corner {
    display: flex;
    align-items: center;
    height: 15px;
    fill: #a0a0a0;
}
.corner svg {
    width: 8px;
    height: 8px;
}

/* graphics area */
.viewport {
    position: relative;
    flex: 1;
    min-width: 0;
    background: linear-gradient(#005d9d, #000f2f);
}
.model {
    width: 100%;
    height: 100%;
}
.viewtools {
    position: absolute;
    top: 7px;
    right: 272px;
    display: flex;
    align-items: center;
    justify-content: space-between;
    width: 322px;
    height: 33px;
    padding: 0 7px 1px 7px;
    border: 1px solid #a9adaf;
    background: #fff;
}
.viewtools button {
    position: relative;
}
.viewtools svg {
    width: 16px;
    height: 16px;
}
.viewtools i {
    position: absolute;
    right: -3px;
    bottom: -2px;
    border: 2px solid #555;
    border-top-color: transparent;
    border-left-color: transparent;
}
.mode {
    position: absolute;
    left: 8px;
    bottom: 91px;
    color: #7d8188;
    font-size: 13px;
}
.watermark {
    position: absolute;
    right: 5px;
    bottom: 5px;
    display: flex;
    width: 206px;
    height: 62px;
    background: #5e6b84;
}
.watermark svg {
    width: 60px;
    height: 60px;
}
.watermark div {
    display: flex;
    flex-direction: column;
    margin-left: -2px;
    color: #1f6a84;
    font-size: 15px;
    line-height: 18px;
}
.watermark strong {
    padding-left: 12px;
    color: #045440;
    font-size: 29px;
    line-height: 40px;
}

/* floating windows */
.window {
    position: absolute;
    display: flex;
    flex-direction: column;
}
.window header {
    display: flex;
    align-items: center;
    flex: none;
    height: 31px;
    padding-right: 10px;
}
.window h2 {
    flex: 1;
    padding-left: 18px;
    text-align: center;
}
.window header svg {
    width: 9px;
    height: 9px;
}
.scale {
    top: 215px;
    left: 2px;
    width: 241px;
    height: 670px;
    background: #fcfcfc;
}
.scale header {
    padding-top: 2px;
    background: #e5e7e8;
    color: #999;
}
.legend {
    display: flex;
    flex: 1;
    min-height: 0;
    padding: 3px 0 4px 3px;
}
.stops {
    display: flex;
    flex-direction: column;
    justify-content: space-between;
    width: 30px;
}
.stops span {
    width: 13px;
    height: 20px;
    background: #000;
    clip-path: polygon(0 0, 100% 50%, 0 100%);
}
.ramp {
    width: 39px;
    margin: 10px 0;
    background: linear-gradient(#f0f, #f00, #ff0, #0f0, #0ff, #00f);
}
.legend ol {
    display: grid;
    grid-template-rows: repeat(33, minmax(0, 1fr));
    margin: 2px 0 0 13px;
    color: #000;
}
.legend li {
    display: flex;
    align-items: center;
}
.legend li i {
    width: 8px;
    height: 16px;
    margin-right: 13px;
    clip-path: polygon(100% 0, 100% 100%, 0 50%);
}
.legend input {
    width: 82px;
    height: 21px;
    padding-left: 2px;
    background: #fff;
    color: #555;
}
.legend li span {
    padding-left: 6px;
    color: #555;
}
.scale footer {
    display: flex;
    flex: none;
    height: 39px;
    padding: 6px 6px 0 9px;
    border-top: 1px solid #c3c7ca;
    background: #eeeff1;
}
.info {
    width: 13px;
    height: 20px;
}
.home {
    width: 16px;
    height: 16px;
    margin: 2px auto 0 16px;
}
.scale footer button {
    height: 19px;
}
.scale footer button svg {
    width: 19px;
    height: 19px;
}

.shading {
    top: 358px;
    right: 112px;
    width: 235px;
    border: 1px solid #8d99a3;
    background: #eeeff1;
}
.shading header {
    margin: 1px;
    background: #d9dddd;
    color: #222;
}
.shading header button {
    color: #777;
}
.pagetabs {
    display: flex;
    margin: 14px 11px -1px;
}
.pagetabs button {
    height: 26px;
    padding: 0 10px;
    border: solid #c5c9cb;
    border-width: 1px 1px 0 0;
    color: #888;
}
.pagetabs .active {
    position: relative;
    padding: 0 7px;
    border-left-width: 1px;
    background: #fcfcfc;
    color: #222;
}
.pagetabs .active span {
    display: block;
    padding: 2px 1px;
    border: 1px dotted #000;
}
.page {
    display: flex;
    flex-direction: column;
    gap: 5px;
    margin: 0 11px;
    padding: 10px;
    border: 1px solid #c5c9cb;
    background: #fcfcfc;
    color: #444;
}
.page hr {
    align-self: stretch;
    height: 1px;
    margin: 5px -10px;
    border: 0;
    background: #c5c9cb;
}
.field {
    display: flex;
    align-items: center;
    height: 25px;
}
.field label {
    flex: none;
    width: 37px;
}
.field.top {
    align-items: flex-start;
    height: 42px;
}
.field.off {
    height: 23px;
    color: #aaa;
}
.field.off input {
    flex: 1;
    min-width: 0;
    height: 23px;
    border: 1px solid #ccc;
    background: #f8f7ff;
}
.listbox {
    display: flex;
    flex: 1;
    height: 42px;
    padding: 1px;
    border: 1px solid #a9a9a9;
    background: #fff;
}
.listbox select {
    flex: 1;
    height: 38px;
    background: #e9fcdb;
    color: #222;
    overflow: hidden;
}
.listbox option {
    height: 19px;
    min-height: 19px;
    padding: 0 5px;
}
.listbox .vscroll {
    flex-direction: column;
    justify-content: space-between;
    background: #dddfe1;
}
.combo {
    display: flex;
    flex: 1;
    height: 25px;
    border: 1px solid #a9adaf;
    background: #f8f8f8;
}
.combo select {
    flex: 1;
    min-width: 0;
    padding-left: 7px;
    appearance: none;
}
.combo i {
    display: flex;
    align-items: center;
    justify-content: center;
    width: 16px;
    border-left: 1px solid #a9adaf;
    pointer-events: none;
}
.combo i svg {
    width: 8px;
    height: 4px;
}
.field input[type=range] {
    width: 98px;
    height: 21px;
    margin: 0 8px 0 -1px;
    appearance: none;
}
input[type=range]::-webkit-slider-runnable-track {
    height: 2px;
    background: #999;
}
input[type=range]::-webkit-slider-thumb {
    width: 9px;
    height: 21px;
    margin-top: -10px;
    border: 1px solid #777;
    background: #f0f0f0;
    border-radius: 1px;
    appearance: none;
}
.field .num {
    width: 47px;
    height: 25px;
    padding-left: 3px;
    border: 1px solid #a9adaf;
    background: #fff;
}
.check {
    gap: 7px;
    padding-left: 2px;
}
.check input {
    display: grid;
    place-items: center;
    width: 12px;
    height: 12px;
    border: 1px solid #666;
    background: #fff;
    appearance: none;
}
.check input:checked::before {
    content: "";
    width: 8px;
    height: 8px;
    background: #222;
    clip-path: polygon(0 45%, 20% 35%, 38% 65%, 85% 0, 100% 12%, 40% 100%);
}
.result {
    display: flex;
    align-items: flex-end;
    gap: 5px;
    margin: 3px 0 5px;
}
.result textarea {
    width: 165px;
    height: 93px;
    padding: 3px;
    border: 1px solid #a9a9a9;
    background: #f3f3f3;
    line-height: 17px;
    white-space: pre;
    overflow: hidden;
    resize: none;
}
.result svg {
    width: 14px;
    height: 16px;
    margin-bottom: 4px;
}
.save {
    gap: 10px;
}
.save .combo {
    flex: none;
    width: 67px;
}
.save .name {
    display: flex;
    justify-content: flex-end;
    flex: 1;
    height: 25px;
    padding: 0 3px;
    border: 1px solid #ccc;
    background: #fff;
    overflow: hidden;
}
.name input {
    flex: none;
    width: 108px;
    color: #aaa;
    text-align: right;
}
.shading footer {
    display: flex;
    gap: 8px;
    margin-top: 16px;
    padding: 10px 11px 11px;
    border-top: 1px solid #c5c9cb;
}
.shading footer button {
    width: 44px;
    height: 25px;
    border: 1px solid #a9adaf;
    background: #fafafa;
}
.shading footer button:first-child {
    width: 60px;
    margin-right: auto;
}
.shading footer .ok {
    border-color: #73c8f5;
    background: #a0e0ff;
}
```
